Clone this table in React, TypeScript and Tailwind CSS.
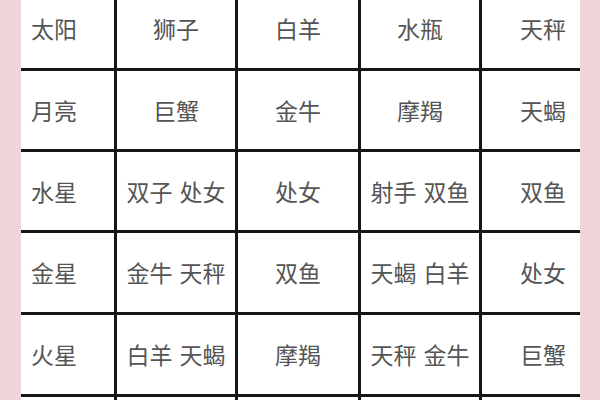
const rows: string[][] = [
  ['太阳', '狮子', '白羊', '水瓶', '天秤'],
  ['月亮', '巨蟹', '金牛', '摩羯', '天蝎'],
  ['水星', '双子 处女', '处女', '射手 双鱼', '双鱼'],
  ['金星', '金牛 天秤', '双鱼', '天蝎 白羊', '处女'],
  ['火星', '白羊 天蝎', '摩羯', '天秤 金牛', '巨蟹'],
  ['', '', '', '', ''],
];

export default function App() {
  return (
    <div className="w-[600px] h-[400px] overflow-hidden bg-[#efd4da] px-[20px] pr-[20px]">
      <div
        className="-mt-[12px] ml-[1px] w-[559px] grid grid-cols-[93px_118px_120px_118px_98px] grid-rows-[80px_78px_78px_79px_79px_40px] gap-[3px] bg-[#161616]"
        style={{ fontFamily: '"Noto Sans CJK SC", "Noto Sans", sans-serif' }}
      >
        {rows.map((row, r) =>
          row.map((cell, c) => (
            <div
              key={`${r}-${c}`}
              className={`bg-white flex items-center gap-[7px] text-[23px] text-[#555555] ${
                c === 0 ? 'justify-start pl-[10px]' : c === 4 ? 'justify-end pr-[14px]' : 'justify-center'
              }`}
            >
              {cell.split(' ').map((w, i) => (
                <span key={i}>{w}</span>
              ))}
            </div>
          ))
        )}
      </div>
    </div>
  );
}
